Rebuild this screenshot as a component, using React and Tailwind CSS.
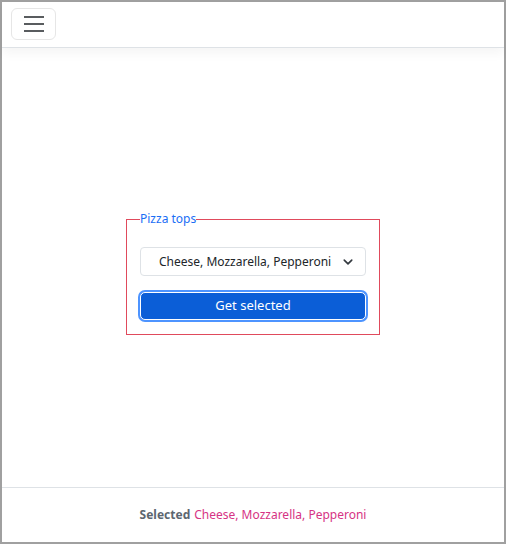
export default function App() {
  return (
    <div
      className="w-[506px] h-[544px] border-2 border-[#a0a0a0] bg-white flex flex-col text-[12px] text-[#212529]"
      style={{ fontFamily: '"Noto Sans", "Open Sans", sans-serif' }}
    >
      {/* Top bar */}
      <header className="h-[46px] shrink-0 border-b border-[#dee2e6] flex items-start pl-[9px] pt-[6px] shadow-[0_6px_10px_rgba(0,0,0,0.04)]">
        <button className="w-[45px] h-[32px] rounded-md border border-[#e6e6e6] flex items-center justify-center">
          <svg width="22" height="18" viewBox="0 0 22 18">
            <path d="M1 2h20M1 9h20M1 16h20" stroke="rgba(33,37,41,0.75)" strokeWidth="2" />
          </svg>
        </button>
      </header>

      {/* Content */}
      <main className="flex-1 flex items-center justify-center">
        <fieldset className="w-[254px] min-w-0 border border-[#e04a5c] px-[13px] pt-[19px] pb-[14px] mt-[10px]">
          <legend className="ml-0 px-0 text-[#1a6ef5] leading-[18px]">Pizza tops</legend>
          <div className="h-[29px] rounded border border-[#dee2e6] flex items-center pl-[18px] pr-[12px]">
            <span className="flex-1 whitespace-nowrap">Cheese, Mozzarella, Pepperoni</span>
            <svg width="10" height="10" viewBox="0 0 16 16" className="ml-2">
              <path d="M2 5l6 6 6-6" fill="none" stroke="#343a40" strokeWidth="2.6" strokeLinecap="round" strokeLinejoin="round" />
            </svg>
          </div>
          <button className="mt-[16px] w-full h-[28px] rounded-[5px] bg-[#0b5ed7] border border-white text-white text-[13px] shadow-[0_0_0_2px_#4d94ff]">
            Get selected
          </button>
        </fieldset>
      </main>

      {/* Footer */}
      <footer className="h-[55px] shrink-0 border-t border-[#dee2e6] flex items-center justify-center">
        <span className="font-bold text-[#5c6670]">Selected</span>
        <span className="ml-1 text-[#d63384]">Cheese, Mozzarella, Pepperoni</span>
      </footer>
    </div>
  );
}
